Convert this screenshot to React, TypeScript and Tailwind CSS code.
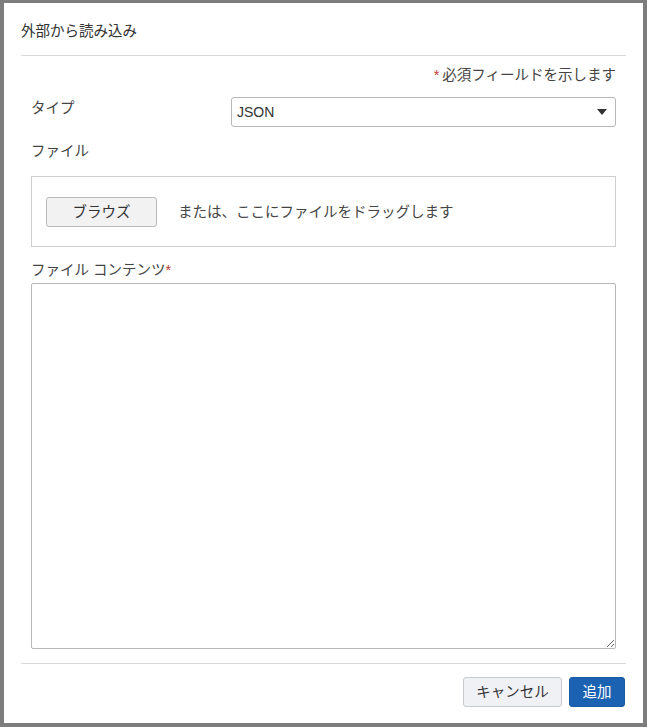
import React from "react";

const font = {
  fontFamily: '"Liberation Sans", "Noto Sans CJK JP", sans-serif',
};

export default function App() {
  return (
    <div
      className="w-[647px] h-[727px] bg-[#7d7d7d] pt-[3px] pl-[4px] overflow-hidden"
      style={font}
    >
      <div className="w-[639px] h-[720px] bg-white flex flex-col text-[14.5px] leading-[20px] text-[#444]">
        <div className="px-[17px] pt-[18px] pb-[14px] text-[#333]">外部から読み込み</div>
        <div className="mx-[17px] h-px bg-[#dadada]" />

        <div className="px-[27px] flex flex-col flex-1">
          <div className="mt-[9px] text-right">
            <span className="text-[#c23934] mr-[3px]">*</span>
            必須フィールドを示します
          </div>

          <div className="mt-[12px] grid grid-cols-[200px_1fr] items-center">
            <div className="-mt-[8px]">タイプ</div>
            <div className="h-[30px] border border-[#b8b8b8] rounded-[3px] flex items-center justify-between pl-[5px] pr-[8px] text-[#333]">
              <span className="text-[14px]">JSON</span>
              <svg width="10" height="6" viewBox="0 0 10 6">
                <path d="M0 0h10L5 6z" fill="#333" />
              </svg>
            </div>
          </div>

          <div className="mt-[14px]">ファイル</div>

          <div className="mt-[15px] h-[71px] border border-[#cfcfcf] flex items-center pl-[14px]">
            <button className="w-[111px] h-[30px] bg-[#f2f2f2] border border-[#b9b9b9] rounded-[3px] text-[#333]">
              ブラウズ
            </button>
            <span className="ml-[21px]">または、ここにファイルをドラッグします</span>
          </div>

          <div className="mt-[13px]">
            ファイル コンテンツ<span className="text-[#c23934]">*</span>
          </div>

          <textarea className="mt-[3px] h-[366px] w-full border border-[#b8b8b8] rounded-[2px] resize-y outline-none" />
        </div>

        <div className="mx-[17px] mt-[14px] h-px bg-[#dadada]" />
        <div className="flex justify-end gap-[7px] pr-[18px] pt-[13px] pb-[16px]">
          <button className="w-[99px] h-[30px] bg-[#f0f1f5] border border-[#c8cad0] rounded-[3px] text-[#333]">
            キャンセル
          </button>
          <button className="w-[56px] h-[30px] bg-[#1c62b2] border border-[#1a5aa3] rounded-[3px] text-white">
            追加
          </button>
        </div>
      </div>
    </div>
  );
}
